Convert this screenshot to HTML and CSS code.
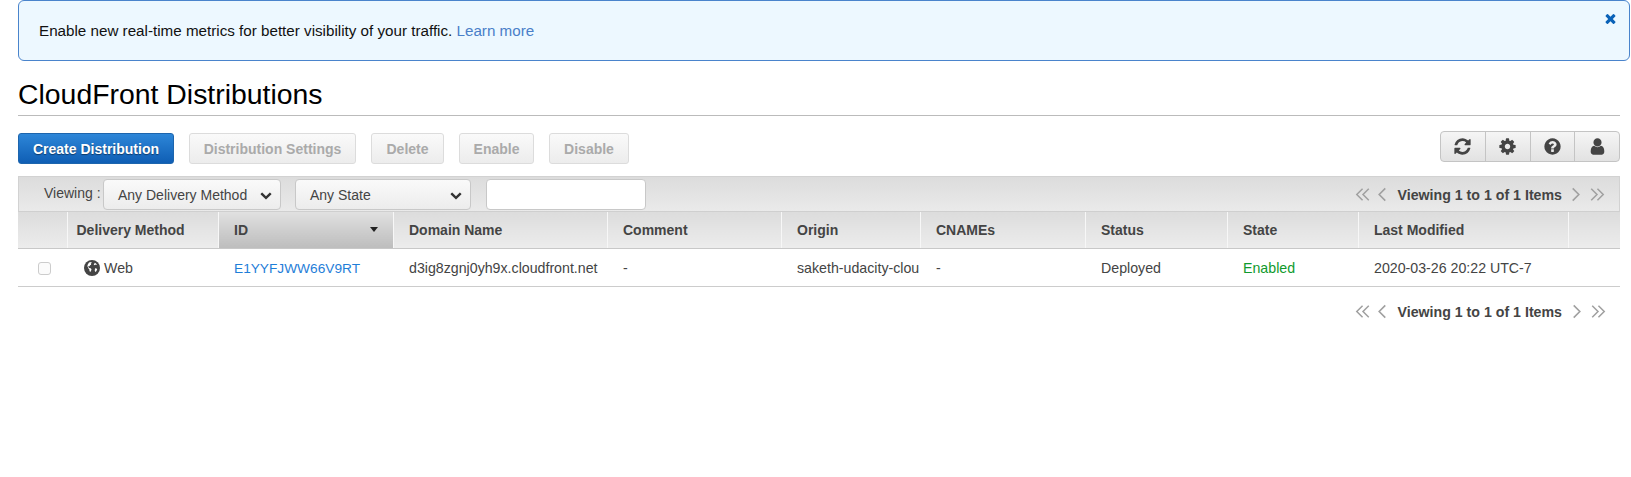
FILE: index.html
```html
<!DOCTYPE html>
<html lang="en">
<head>
<meta charset="utf-8">
<title>CloudFront Distributions</title>
<link rel="stylesheet" href="styles.css">
</head>
<body>
<svg class="defs" width="0" height="0" aria-hidden="true">
  <symbol id="i-refresh" viewBox="0 0 1792 1792"><path d="M1639 1056q0 5-1 7-64 268-268 434.5t-478 166.5q-146 0-282.5-55t-243.5-157l-129 129q-19 19-45 19t-45-19-19-45v-448q0-26 19-45t45-19h448q26 0 45 19t19 45-19 45l-137 137q71 66 161 102t187 36q134 0 250-65t186-179q11-17 53-117 8-23 30-23h192q13 0 22.5 9.5t9.5 22.5zm25-800v448q0 26-19 45t-45 19h-448q-26 0-45-19t-19-45 19-45l138-138q-148-137-349-137-134 0-250 65t-186 179q-11 17-53 117-8 23-30 23h-199q-13 0-22.5-9.5t-9.5-22.5v-7q65-268 270-434.5t480-166.5q146 0 284 55.5t245 156.5l130-129q19-19 45-19t45 19 19 45z"/></symbol>
  <symbol id="i-cog" viewBox="0 0 1792 1792"><path d="M1152 896q0-106-75-181t-181-75-181 75-75 181 75 181 181 75 181-75 75-181zm512-109v222q0 12-8 23t-20 13l-185 28q-19 54-39 91 35 50 107 138 10 12 10 25t-9 23q-27 37-99 108t-94 71q-12 0-26-9l-138-108q-44 23-91 38-16 136-29 186-7 28-36 28h-222q-14 0-24.5-8.5t-11.5-21.5l-28-184q-49-16-90-37l-141 107q-10 9-25 9-14 0-25-11-126-114-165-168-7-10-7-23 0-12 8-23 15-21 51-66.5t54-70.5q-27-50-41-99l-183-27q-13-2-21-12.5t-8-23.5v-222q0-12 8-23t19-13l186-28q14-46 39-92-40-57-107-138-10-12-10-24 0-10 9-23 26-36 98.5-107.5t94.5-71.5q13 0 26 10l138 107q44-23 91-38 16-136 29-186 7-28 36-28h222q14 0 24.5 8.5t11.5 21.5l28 184q49 16 90 37l142-107q9-9 24-9 13 0 25 10 129 119 165 170 7 8 7 22 0 12-8 23-15 21-51 66.5t-54 70.5q26 50 41 98l183 28q13 2 21 12.5t8 23.5z"/></symbol>
  <symbol id="i-help" viewBox="0 0 1792 1792"><path d="M1024 1376v-192q0-14-9-23t-23-9h-192q-14 0-23 9t-9 23v192q0 14 9 23t23 9h192q14 0 23-9t9-23zm256-672q0-88-55.5-163t-138.5-116-170-41q-243 0-371 213-15 24 8 42l132 100q7 6 19 6 16 0 25-12 53-68 86-92 34-24 86-24 48 0 85.5 26t37.5 59q0 38-20 61t-68 45q-63 28-115.5 86.5t-52.5 125.5v36q0 14 9 23t23 9h192q14 0 23-9t9-23q0-19 21.5-49.5t54.5-49.5q32-18 49-28.5t46-35 44.5-48 28-60.5 12.5-81zm384 192q0 209-103 385.5t-279.5 279.5-385.5 103-385.5-103-279.5-279.5-103-385.5 103-385.5 279.5-279.5 385.5-103 385.5 103 279.5 279.5 103 385.5z"/></symbol>
  <symbol id="i-user" viewBox="0 0 1792 1792"><path d="M1536 1399q0 109-62.5 187t-150.5 78h-854q-88 0-150.5-78t-62.5-187q0-85 8.5-160.5t31.5-152 58.5-131 94-89 134.5-34.5q131 128 313 128t313-128q76 0 134.5 34.5t94 89 58.5 131 31.5 152 8.5 160.5zm-256-887q0 159-112.5 271.5t-271.5 112.5-271.5-112.5-112.5-271.5 112.5-271.5 271.5-112.5 271.5 112.5 112.5 271.5z"/></symbol>
  <symbol id="i-close" viewBox="0 0 1792 1792"><path d="M1490 1322q0 40-28 68l-136 136q-28 28-68 28t-68-28l-294-294-294 294q-28 28-68 28t-68-28l-136-136q-28-28-28-68t28-68l294-294-294-294q-28-28-28-68t28-68l136-136q28-28 68-28t68 28l294 294 294-294q28-28 68-28t68 28l136 136q28 28 28 68t-28 68l-294 294 294 294q28 28 28 68z"/></symbol>
  <symbol id="i-chev" viewBox="0 0 1792 1792"><path d="M1683 808l-742 741q-19 19-45 19t-45-19l-742-741q-19-19-19-45.5t19-45.5l166-165q19-19 45-19t45 19l531 531 531-531q19-19 45-19t45 19l166 165q19 19 19 45.5t-19 45.5z"/></symbol>
  <symbol id="i-first" viewBox="0 0 18 16"><path d="M8.500 1.500 2 8l6.500 6.500M15.500 1.500 9 8l6.500 6.500" fill="none" stroke="currentColor" stroke-width="1.700"/></symbol>
  <symbol id="i-prev" viewBox="0 0 10 16"><path d="M8.500 1.500 2 8l6.500 6.500" fill="none" stroke="currentColor" stroke-width="1.700"/></symbol>
  <symbol id="i-next" viewBox="0 0 10 16"><path d="M1.500 1.500 8 8l-6.500 6.500" fill="none" stroke="currentColor" stroke-width="1.700"/></symbol>
  <symbol id="i-last" viewBox="0 0 18 16"><path d="M2.500 1.500 9 8l-6.500 6.500M9.500 1.500 16 8l-6.500 6.500" fill="none" stroke="currentColor" stroke-width="1.700"/></symbol>
  <symbol id="i-globe" viewBox="0 0 16 16"><circle cx="8" cy="8" r="8"/><path fill="#fff" d="M5 2.600 7.200 2l.5.800-.9 1 .4.900-1.200.5-.4 1.100-1-.2-.3 1 .9 1 1.500.2.800 1-.5 1.700-.8.900-.7-1-.2-1.700-1.100-1-.3-1.200-.6-.8.500-1.700zM10.800 2.800c.9.400 1.600 1.100 2.100 1.900l-.9.300-.9-.4-.6.600-.8-.5zM11 8.200l1.500.2.700.9-.9 1.900-1.100.8-.5-1.400.2-1.200z"/></symbol>
</svg>

<section class="banner">
  <p class="banner-text">Enable new real-time metrics for better visibility of your traffic. <a class="banner-link" href="#">Learn more</a></p>
  <svg class="banner-close"><use href="#i-close"/></svg>
</section>

<main class="page">
  <h1 class="title">CloudFront Distributions</h1>

  <div class="toolbar">
    <button class="btn btn-primary btn-create">Create Distribution</button>
    <button class="btn btn-settings">Distribution Settings</button>
    <button class="btn btn-delete">Delete</button>
    <button class="btn btn-enable">Enable</button>
    <button class="btn btn-disable">Disable</button>
    <div class="tools">
      <span class="tool"><svg class="tool-ic"><use href="#i-refresh"/></svg></span>
      <span class="tool"><svg class="tool-ic"><use href="#i-cog"/></svg></span>
      <span class="tool"><svg class="tool-ic"><use href="#i-help"/></svg></span>
      <span class="tool"><svg class="tool-ic"><use href="#i-user"/></svg></span>
    </div>
  </div>

  <div class="filter">
    <span class="filter-label">Viewing :</span>
    <span class="select select-method">Any Delivery Method<svg class="chev"><use href="#i-chev"/></svg></span>
    <span class="select select-state">Any State<svg class="chev"><use href="#i-chev"/></svg></span>
    <span class="search"></span>
    <div class="pager pager-top">
      <svg class="pg pg-d"><use href="#i-first"/></svg>
      <svg class="pg pg-s"><use href="#i-prev"/></svg>
      <span class="pager-text">Viewing 1 to 1 of 1 Items</span>
      <svg class="pg pg-s"><use href="#i-next"/></svg>
      <svg class="pg pg-d"><use href="#i-last"/></svg>
    </div>
  </div>

  <table class="grid">
    <colgroup>
      <col class="c1"><col class="c2"><col class="c3"><col class="c4"><col class="c5"><col class="c6"><col class="c7"><col class="c8"><col class="c9"><col class="c10"><col class="c11">
    </colgroup>
    <thead>
      <tr>
        <th></th>
        <th class="method-head">Delivery Method</th>
        <th class="sorted">ID<span class="caret"></span></th>
        <th>Domain Name</th>
        <th>Comment</th>
        <th>Origin</th>
        <th>CNAMEs</th>
        <th>Status</th>
        <th>State</th>
        <th>Last Modified</th>
        <th></th>
      </tr>
    </thead>
    <tbody>
      <tr>
        <td class="check-cell"><span class="check"></span></td>
        <td class="method"><svg class="globe"><use href="#i-globe"/></svg>Web</td>
        <td><a class="id-link" href="#">E1YYFJWW66V9RT</a></td>
        <td>d3ig8zgnj0yh9x.cloudfront.net</td>
        <td>-</td>
        <td>saketh-udacity-clou</td>
        <td>-</td>
        <td>Deployed</td>
        <td class="enabled">Enabled</td>
        <td>2020-03-26 20:22 UTC-7</td>
        <td></td>
      </tr>
    </tbody>
  </table>

  <div class="pager pager-bottom">
    <svg class="pg pg-d"><use href="#i-first"/></svg>
    <svg class="pg pg-s"><use href="#i-prev"/></svg>
    <span class="pager-text">Viewing 1 to 1 of 1 Items</span>
    <svg class="pg pg-s"><use href="#i-next"/></svg>
    <svg class="pg pg-d"><use href="#i-last"/></svg>
  </div>
</main>
</body>
</html>
```
FILE: styles.css
```css
* { box-sizing: border-box; }
html, body { margin: 0; padding: 0; background: #fff; }
body { font-family: "Liberation Sans", Arial, sans-serif; font-size: 14px; color: #444; }
.defs { position: absolute; }

.banner {
  display: flex; align-items: center; justify-content: space-between;
  height: 61px; margin: 0 1px 0 18px; padding: 0 11px 0 20px;
  background: #edf8ff; border: 1px solid #4a84cc; border-radius: 6px;
  position: relative;
}
.banner-text { margin: 0; color: #111; font-size: 15.2px; }
.banner-link { color: #4a7fc9; text-decoration: none; }
.banner-close { position: absolute; right: 11px; top: 10px; width: 15px; height: 15px; fill: #0a62b8; }

.page { padding: 0 11px 0 18px; }
.title {
  margin: 0; height: 55px; padding-top: 15px;
  font-size: 28.4px; line-height: 36px; font-weight: 400; color: #000;
  border-bottom: 1px solid #bbb;
}

.toolbar { display: flex; align-items: flex-start; height: 33px; margin-top: 15px; }
.btn {
  height: 31px; margin-top: 2px; padding: 0; font: bold 14px "Liberation Sans", Arial, sans-serif;
  color: #aaa; background: linear-gradient(#fafafa, #ececec);
  border: 1px solid #dcdcdc; border-radius: 3px;
}
.btn-primary {
  color: #fff; background: linear-gradient(#2d86d8, #0f5eb4);
  border-color: #1d65ad; text-shadow: 0 1px 1px rgba(0,0,0,.45);
}
.btn-create { width: 156px; }
.btn-settings { width: 167px; margin-left: 15px; }
.btn-delete { width: 73px; margin-left: 15px; }
.btn-enable { width: 75px; margin-left: 15px; }
.btn-disable { width: 80px; margin-left: 15px; }
.tools {
  display: flex; margin-left: auto; width: 180px; height: 31px;
  border: 1px solid #c4c4c4; border-radius: 4px;
  background: linear-gradient(#f5f5f5, #e2e2e2);
}
.tool { flex: 1; display: flex; align-items: center; justify-content: center; border-left: 1px solid #c4c4c4; }
.tool:first-child { border-left: 0; }
.tool-ic { width: 19px; height: 19px; fill: #444; }

.filter {
  display: flex; align-items: center; height: 36px; margin-top: 12px; padding: 1px 0 0 25px;
  background: linear-gradient(#dcdcdc, #eaeaea);
  border: 1px solid #d2d2d2; border-bottom: 1px solid #cfcfcf;
}
.filter-label { width: 59px; margin-top: -4px; color: #444; }
.select {
  display: flex; align-items: center; justify-content: space-between;
  height: 31px; padding: 0 8px 0 14px; color: #444;
  background: linear-gradient(#fafafa, #ececec);
  border: 1px solid #c8c8c8; border-radius: 4px;
}
.select-method { width: 178px; }
.select-state { width: 176px; margin-left: 14px; }
.chev { width: 12px; height: 12px; fill: #333; }
.search {
  width: 160px; height: 31px; margin-left: 15px;
  background: #fff; border: 1px solid #c8c8c8; border-radius: 4px;
}

.pager { display: flex; align-items: center; color: #a0a0a0; }
.pager-top { margin-left: auto; padding-right: 14px; }
.pager-bottom { justify-content: flex-end; height: 50px; padding-right: 14px; }
.pager-text { margin: 0 9px 0 10px; font-weight: 700; font-size: 14.2px; color: #444; }
.pager-bottom .pager-text { margin-right: 10px; }
.pg { height: 15px; }
.pg-d { width: 16px; }
.pg-s { width: 10px; }
.pg-d + .pg-s { margin-left: 6px; }
.pg-s + .pg-d { margin-left: 8px; }

.grid { width: 1602px; table-layout: fixed; border-collapse: collapse; }
.c1 { width: 49px; } .c2 { width: 151px; } .c3 { width: 175px; } .c4 { width: 214px; }
.c5 { width: 174px; } .c6 { width: 139px; } .c7 { width: 165px; } .c8 { width: 142px; }
.c9 { width: 131px; } .c10 { width: 210px; } .c11 { width: 52px; }
.grid th {
  height: 36px; padding: 0 0 0 15.500px; text-align: left; font-weight: 700; color: #444;
  background: linear-gradient(#dcdcdc, #ececec);
  border-left: 1px solid #f7f7f7; border-bottom: 1px solid #c8c8c8;
  position: relative;
}
.grid th:first-child { border-left: 0; }
.grid th.method-head { padding-left: 9px; }
.grid th.sorted { background: linear-gradient(#e0e0e0, #bdbdbd); }
.caret {
  position: absolute; right: 15px; top: 15px; width: 0; height: 0;
  border-left: 4px solid transparent; border-right: 4px solid transparent; border-top: 5px solid #222;
}
.grid td {
  height: 38px; padding: 2px 0 0 16px; white-space: nowrap; overflow: hidden; color: #444; font-size: 14.2px;
  border-bottom: 1px solid #ccc;
}
.grid td.check-cell { padding-left: 20px; }
.check { display: block; width: 13px; height: 13px; background: #fbfbfb; border: 1px solid #ccc; border-radius: 3px; }
.grid td.method { padding-left: 17px; }
.globe { width: 16px; height: 16px; margin-right: 4px; vertical-align: -3px; fill: #444; }
.id-link { color: #1f7ed8; text-decoration: none; font-size: 13.7px; }
.grid td.enabled { color: #109a2d; }
```
